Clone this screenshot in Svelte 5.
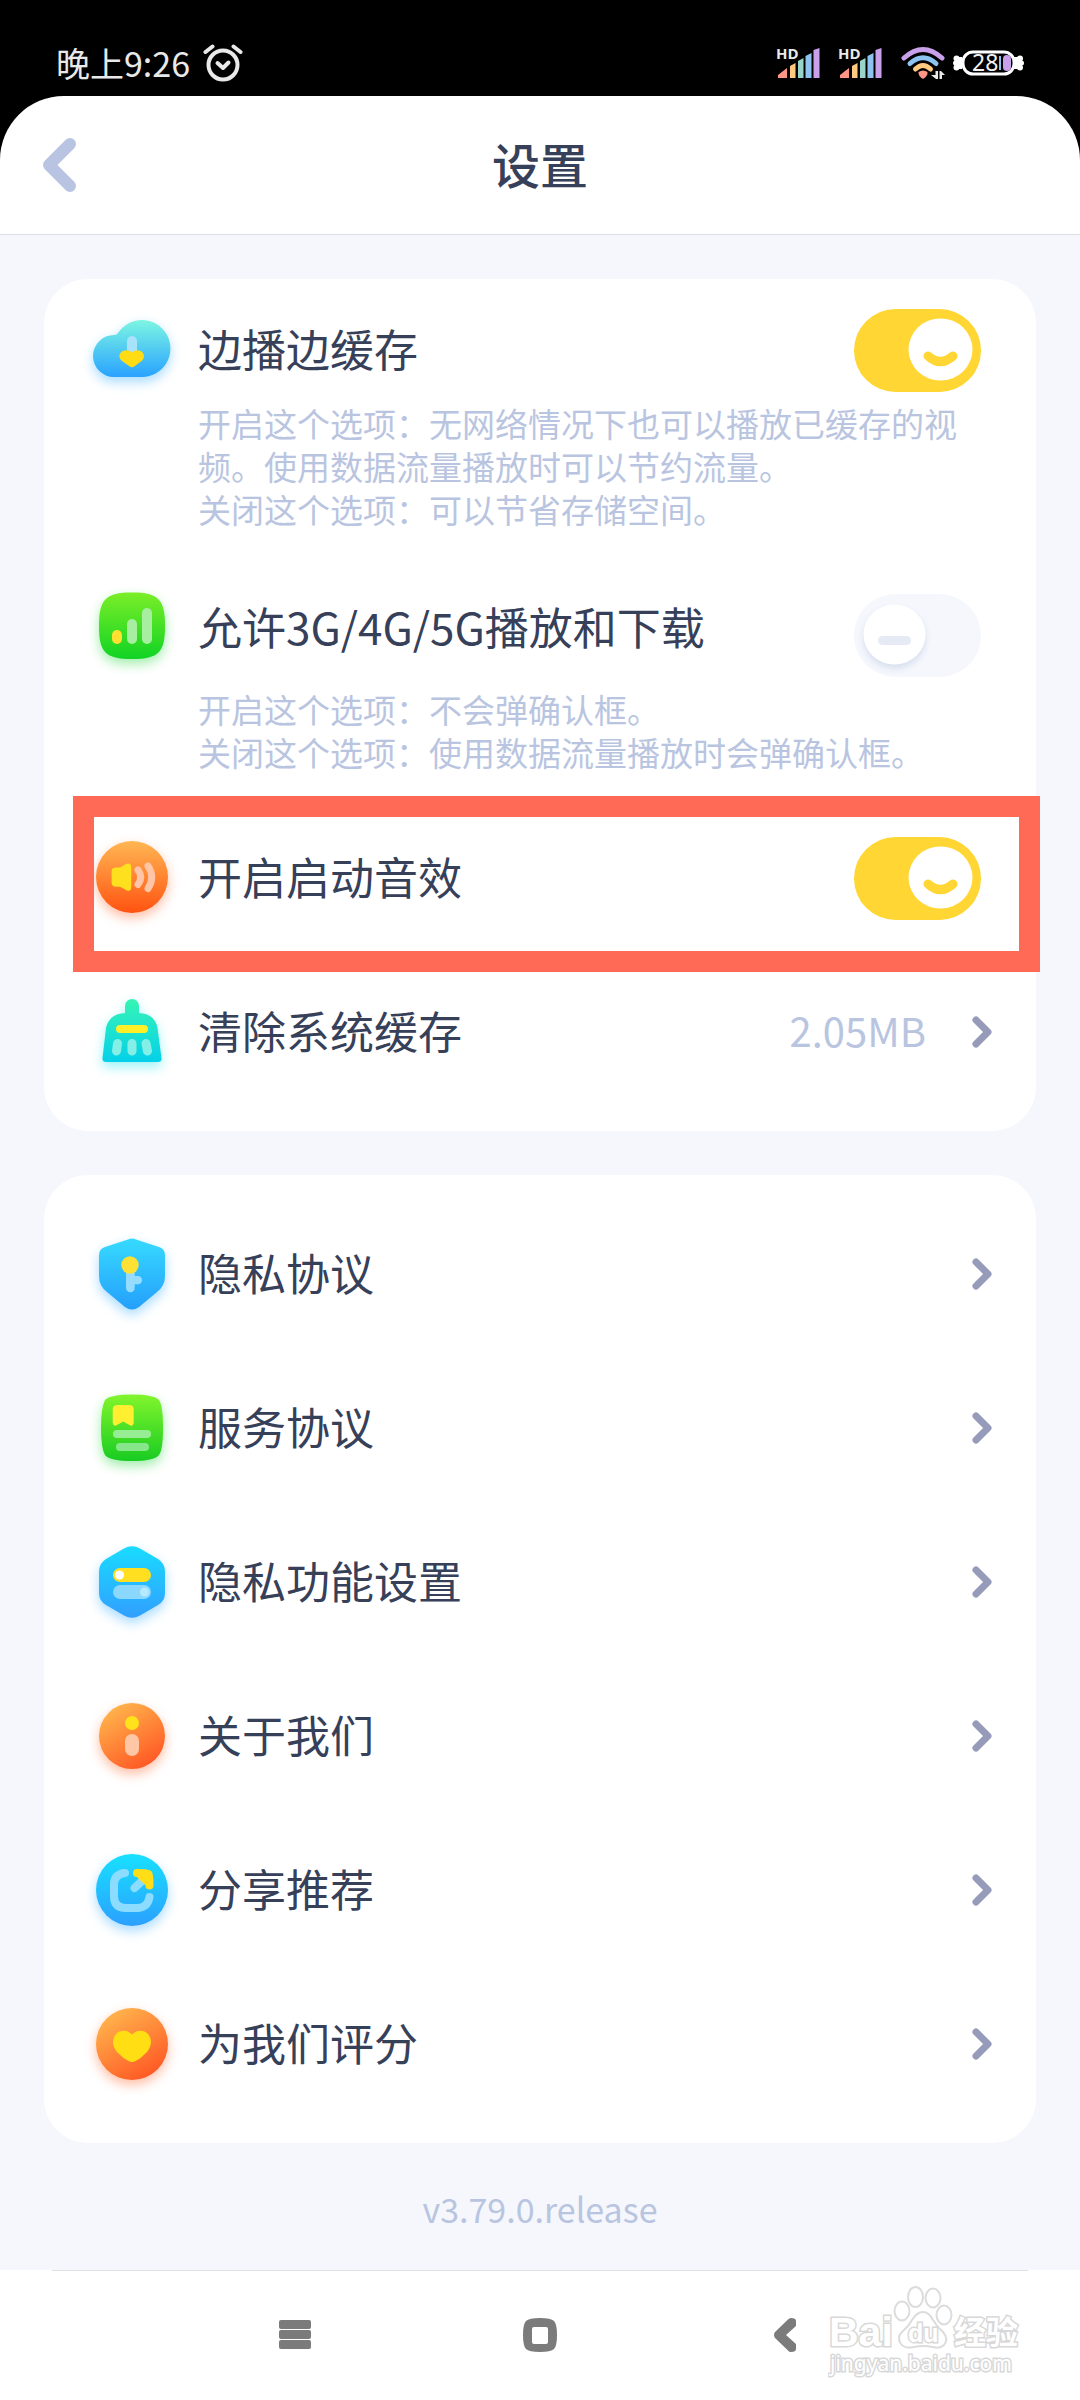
<script>
  let options = $state([
    {
      id: 'cache',
      title: '边播边缓存',
      checked: true,
      notes: [
        '开启这个选项：无网络情况下也可以播放已缓存的视频。使用数据流量播放时可以节约流量。',
        '关闭这个选项：可以节省存储空间。'
      ]
    },
    {
      id: 'mobile',
      title: '允许3G/4G/5G播放和下载',
      checked: false,
      notes: [
        '开启这个选项：不会弹确认框。',
        '关闭这个选项：使用数据流量播放时会弹确认框。'
      ]
    }
  ]);
  let sound = $state(true);
  let cacheSize = '2.05MB';

  const links = [
    { id: 'privacy', title: '隐私协议' },
    { id: 'service', title: '服务协议' },
    { id: 'toggles', title: '隐私功能设置' },
    { id: 'about', title: '关于我们' },
    { id: 'share', title: '分享推荐' },
    { id: 'rate', title: '为我们评分' }
  ];

  // top colour, bottom colour of each gradient
  const gradients = {
    cache: ['#7df6e2', '#28a2ff'],
    mobile: ['#7bee28', '#10d324'],
    sound: ['#ffb653', '#ff5310'],
    clean: ['#36f5b4', '#04d0ea'],
    privacy: ['#37daff', '#249ffb'],
    service: ['#82f52c', '#18cc22'],
    toggles: ['#19dcff', '#319fff'],
    about: ['#ffc152', '#ff5c26'],
    share: ['#18e0ff', '#2ba0ff'],
    rate: ['#ffc152', '#ff5c26']
  };
</script>

{#snippet icon(id)}
  <svg class="icon {id}" viewBox="0 0 88 88" aria-hidden="true">
    {#if id === 'cache'}
      <path fill="url(#g-cache)" d="M26 71A21 21 0 0 1 26 29Q29 29 30 27A28.5 28.5 0 1 1 54 71Z" />
      <rect x="39" y="30" width="10" height="22" rx="5" fill="#a8e2fb" />
      <path fill="#ffdc14" d="M44 46.5C47 43.500 52 43.500 54.500 46.500C57 50 56 53 53.500 55L46.500 60.300Q44 62 41.500 60.300L34 55C31 52.500 30.500 49 33 46.500C35.500 43.500 41 43.500 44 46.500Z" />
    {:else if id === 'mobile'}
      <path fill="url(#g-mobile)" d="M44 8.500C71 8.500 77 16 77 42S71 75 44 75S11 68 11 42S17 8.500 44 8.500Z" />
      <rect x="24" y="46" width="10" height="14" rx="5" fill="#ffe02e" />
      <rect x="39" y="35" width="10" height="25" rx="5" fill="#a7eea0" />
      <rect x="54" y="24" width="10" height="36" rx="5" fill="#a7eea0" />
    {:else if id === 'sound'}
      <circle cx="44" cy="43" r="36" fill="url(#g-sound)" />
      <path fill="#ffe01f" d="M28 33.500H32L38.500 29.800Q43.300 28 43.300 34V52Q43.300 58.500 38.500 56.300L32 52.800H28Q23.600 52.500 23.600 48.500V37.500Q23.600 33.500 28 33.500Z" />
      <path class="soft-line" stroke-width="7" d="M50 36Q55.500 43 50 50.500M60 32Q67.500 43 60 54.500" stroke="#ffc5a6" />
    {:else if id === 'clean'}
      <path fill="url(#g-clean)" d="M37 26V18A7 7 0 0 1 51 18V25Q67 26 69.500 40L73.500 70Q74 74 70 74H18Q14 74 14.500 70L18 40Q21 26 37 25Z" />
      <rect x="28" y="37" width="32" height="8" rx="4" fill="#ffef28" />
      <path class="soft-line" stroke-width="9" d="M29.500 55.500L28.500 63M44 55.500V63M58 55.500L59.500 63" stroke="#84efe6" />
    {:else if id === 'privacy'}
      <path fill="url(#g-privacy)" d="M40 9.500Q44 7.500 48 9.500L71 17Q77 19 77 25V46Q77 56 69 62L51 77Q44 82 37 77L19 62Q11 56 11 46V25Q11 19 17 17Z" />
      <path fill="#96dcff" d="M38 38H46.700V46H50A4 4 0 0 1 50 54.300H46.700V58A4.300 4.300 0 0 1 38 58Z" />
      <circle cx="42" cy="35" r="8.700" fill="#ffe136" />
    {:else if id === 'service'}
      <path fill="url(#g-service)" d="M44 10.500Q66 10.500 71 16Q75 22 75 44T71 71Q66 77 44 77T17 71Q13 64 13 44T17 16Q22 10.500 44 10.500Z" />
      <path fill="#ffef30" d="M30 21H41Q45.700 21 45.700 25V39Q45 43 41.500 41L35.200 37.500L29 41Q25.500 43 24.700 39V25Q24.700 21 30 21Z" />
      <rect x="25" y="46" width="38" height="8" rx="4" fill="#96ed93" />
      <rect x="28" y="59" width="33" height="8" rx="4" fill="#86e68a" />
    {:else if id === 'toggles'}
      <path fill="url(#g-toggles)" d="M36 10.500Q44 6 52 10.500L70 21Q77 25.500 77 33V55Q77 63 70 67L52 77.500Q44 82 36 77.500L18 67Q11 63 11 55V33Q11 25.500 18 21Z" />
      <rect x="25" y="30" width="38" height="14" rx="7" fill="#ffdf1f" />
      <circle cx="31.500" cy="37" r="4.500" fill="#fff" />
      <rect x="25" y="47" width="38" height="14" rx="7" fill="#8bd8ff" />
      <circle cx="56.500" cy="54" r="4.500" fill="#b8eaff" />
    {:else if id === 'about'}
      <circle cx="44" cy="44" r="33" fill="url(#g-about)" />
      <circle cx="44" cy="31" r="7" fill="#ffe11c" />
      <rect x="37" y="42" width="14" height="22" rx="7" fill="#ffc7a5" />
    {:else if id === 'share'}
      <circle cx="44" cy="44" r="36" fill="url(#g-share)" />
      <path class="soft-line" stroke-width="8" d="M37 27H36Q26 29 26 38V50Q26 62 38 62H50Q60 61 61.500 51M46.500 42L54 35" stroke="#8cdcff" />
      <path class="soft-line" stroke-width="8" d="M49 27Q58 27 60.500 28Q61.500 31 61.500 39.500M51 27.500L60 36" stroke="#ffde17" />
    {:else if id === 'rate'}
      <circle cx="44" cy="44" r="36" fill="url(#g-rate)" />
      <path fill="#ffde14" d="M44 34.500C48 29.500 56 29.500 60 34C65 40 63 47 59 52Q53 58.500 47 61.300Q44 62.500 41 61.300Q35 58.500 29 52C25 47 23 40 28 34C32 29.500 40 29.500 44 34.500Z" />
    {/if}
  </svg>
{/snippet}

{#snippet knob(on)}
  <svg class="switch-face" viewBox="0 0 127 83" aria-hidden="true">
    {#if on}
      <ellipse cx="86.500" cy="40.500" rx="32" ry="31" fill="#fff" />
      <path d="M74 47Q86.500 58 99 47" fill="none" stroke="#ffd633" stroke-width="9" stroke-linecap="round" />
    {:else}
      <ellipse class="knob-off" cx="40.500" cy="40.500" rx="31" ry="30" fill="#fff" />
      <rect x="24" y="42" width="33" height="9" rx="4.500" fill="#e5eaf5" />
    {/if}
  </svg>
{/snippet}

{#snippet chevron()}
  <svg class="chevron" viewBox="0 0 20 32" aria-hidden="true">
    <path d="M4 4L16 16L4 28" fill="none" stroke="#959bb9" stroke-width="7" stroke-linecap="round" stroke-linejoin="round" />
  </svg>
{/snippet}

{#snippet signal()}
  <svg width="44" height="44" viewBox="0 -6 44 44" aria-hidden="true">
    <path fill="#ff9685" d="M2 31V28L11 21V31Z" />
    <path fill="#ffc980" d="M14 31V19L19.500 16V31Z" />
    <path fill="#97d5cb" d="M22 31V14L27.500 11V31Z" />
    <path fill="#8dc3f0" d="M29.500 31V9L35.500 6V31Z" />
    <path fill="#c9a1ea" d="M37.500 31V3L43.500 1V31Z" />
    <text x="0" y="12" class="hd">HD</text>
  </svg>
{/snippet}

<svg class="defs" aria-hidden="true">
  <defs>
    {#each Object.entries(gradients) as [id, stops]}
      <linearGradient id="g-{id}" x1="0" y1="0" x2={id === 'about' || id === 'rate' ? 0.6 : 0} y2="1">
        <stop offset="0" stop-color={stops[0]} />
        <stop offset="1" stop-color={stops[1]} />
      </linearGradient>
    {/each}
  </defs>
</svg>

<div class="screen">
  <div class="status">
    <div class="clock">
      <span>晚上9:26</span>
      <svg width="40" height="38" viewBox="0 0 40 38" aria-hidden="true">
        <g fill="none" stroke="#e9e9e9" stroke-width="4" stroke-linecap="round" stroke-linejoin="round">
          <circle cx="20" cy="21" r="14.500" />
          <path d="M14.500 19L20 24L25.500 18.500" />
          <path d="M2.500 8L9.500 2.500M37.500 8L30.500 2.500" />
        </g>
      </svg>
    </div>
    <div class="signals">
      {@render signal()}
      {@render signal()}
      <svg width="46" height="36" viewBox="0 0 46 36" aria-hidden="true">
        <g fill="none" stroke-width="5" stroke-linecap="round">
          <path stroke="#c9a1ea" d="M4 13Q23 -4 42 13" />
          <path stroke="#8dc3f0" d="M10 18.500Q23 7 36 18.500" />
          <path stroke="#ffc980" d="M15.500 24Q23 17 30.500 24" />
        </g>
        <path fill="#ff9685" d="M18.500 27Q23 24 27.500 27Q28 31 23 34Q18 31 18.500 27Z" />
        <path fill="#e9e9e9" d="M35.500 26H38V34H36L31 30H35.500ZM39.500 34V26H41L45 30H42V34Z" />
      </svg>
      <svg class="battery" width="76" height="32" viewBox="0 0 76 32" aria-hidden="true">
        <g fill="#fff">
          <circle cx="6.500" cy="11.500" r="3" /><circle cx="5.500" cy="16" r="2.500" /><circle cx="6.500" cy="20.500" r="3" /><rect x="7" y="10" width="5" height="12" />
          <circle cx="70" cy="11.500" r="3" /><circle cx="71.500" cy="16" r="2.500" /><circle cx="70" cy="20.500" r="3" /><rect x="64" y="10" width="6" height="12" />
        </g>
        <rect x="13" y="5" width="51" height="22" rx="10" fill="none" stroke="#fff" stroke-width="3" />
        <rect x="49" y="9" width="2" height="14" fill="#8dc3f0" />
        <rect x="53" y="8" width="8" height="16" rx="4" fill="#c9a1ea" />
        <text x="22" y="24" class="level">28</text>
      </svg>
    </div>
  </div>

  <header>
    <button class="back" aria-label="返回">
      <svg width="34" height="54" viewBox="0 0 34 54" aria-hidden="true">
        <path d="M28 6L7 27L28 48" fill="none" stroke="#b8c4e2" stroke-width="12" stroke-linecap="round" stroke-linejoin="round" />
      </svg>
    </button>
    <h1>设置</h1>
  </header>

  <main>
    <section class="card">
      {#each options as option (option.id)}
        <div class="option {option.id}">
          <div class="head">
            {@render icon(option.id)}
            <label class="title" for={option.id}>{option.title}</label>
            <span class="switch" class:on={option.checked}>
              <input id={option.id} type="checkbox" bind:checked={option.checked} />
              {@render knob(option.checked)}
            </span>
          </div>
          <div class="notes">
            {#each option.notes as note}
              <p>{note}</p>
            {/each}
          </div>
        </div>
      {/each}
      <div class="row">
        {@render icon('sound')}
        <label class="title" for="sound">开启启动音效</label>
        <span class="switch" class:on={sound}>
          <input id="sound" type="checkbox" bind:checked={sound} />
          {@render knob(sound)}
        </span>
        <span class="highlight"></span>
      </div>
      <button class="row">
        {@render icon('clean')}
        <span class="title">清除系统缓存</span>
        <span class="value">{cacheSize}</span>
        {@render chevron()}
      </button>
    </section>

    <nav class="card">
      {#each links as link (link.id)}
        <a class="row" href="#{link.id}">
          {@render icon(link.id)}
          <span class="title">{link.title}</span>
          {@render chevron()}
        </a>
      {/each}
    </nav>
  </main>

  <p class="version">v3.79.0.release</p>

  <footer>
    <button aria-label="菜单">
      <svg width="34" height="34" viewBox="0 0 34 34" fill="#7b7b7b" aria-hidden="true">
        <rect x="1" y="2" width="32" height="9" rx="2" />
        <rect x="1" y="12" width="32" height="9" rx="2" />
        <rect x="1" y="22" width="32" height="9" rx="2" />
      </svg>
    </button>
    <button aria-label="主屏幕">
      <svg width="34" height="34" viewBox="0 0 34 34" aria-hidden="true">
        <path fill="#7b7b7b" fill-rule="evenodd" d="M17 0Q28 0 31 3T34 17T31 31T17 34T3 31T0 17T3 3T17 0ZM11 9Q9 9 9 11V24Q9 26 11 26H23Q25 26 25 24V11Q25 9 23 9Z" />
      </svg>
    </button>
    <button aria-label="返回上一页">
      <svg width="22" height="34" viewBox="0 0 22 34" aria-hidden="true">
        <path fill="#7b7b7b" d="M14 1.500Q15 0 17 0Q22 0 22 3V8L12 17L22 26V31Q22 34 17 34Q15 34 14 32.500L1 20Q-1 17 1 14Z" />
      </svg>
    </button>
    <svg class="watermark" width="196" height="100" viewBox="0 0 196 100">
      <g fill="#fff" stroke="#dcdcdc" stroke-width="2">
        <ellipse cx="74" cy="29" rx="7.500" ry="9.500" />
        <ellipse cx="87.500" cy="15" rx="7.500" ry="10" />
        <ellipse cx="105" cy="16" rx="7.500" ry="9.500" />
        <ellipse cx="116" cy="33" rx="7.500" ry="9.500" />
        <path d="M95 30Q101 30 105 38Q109 45 115 50Q121 57 116 63Q112 67 105 65Q95 63 86 65Q77 67 73 62Q68 55 75 49Q81 44 84 38Q89 30 95 30Z" />
      </g>
      <text x="1" y="64" class="brand">Bai</text>
      <text x="80" y="60" class="du">du</text>
      <text x="126" y="62" class="cn">经验</text>
      <text x="2" y="89" class="site">jingyan.baidu.com</text>
    </svg>
  </footer>
</div>

<style>
  :global(body) {
    margin: 0;
    background: #fff;
  }
  .defs { position: absolute; width: 0; height: 0; }
  .screen {
    font-family: "Noto Sans CJK SC", "Noto Sans", sans-serif;
    background: #f5f7fd;
    color: #374059;
    min-height: 100vh;
    display: flex;
    flex-direction: column;
  }
  h1, p { margin: 0; }
  button { border: 0; background: none; padding: 0; font: inherit; color: inherit; cursor: pointer; }
  svg { flex: none; display: block; }

  .status {
    background: #000;
    color: #e9e9e9;
    display: flex;
    justify-content: space-between;
    padding: 39px 54px 73px 56px;
    margin-bottom: -64px;
  }
  .clock, .signals { display: flex; align-items: center; height: 48px; }
  .clock { gap: 13px; font-size: 34px; line-height: 48px; }
  .signals { gap: 18px; }
  .battery { margin-left: -14px; }
  .hd { font: bold 15px "Open Sans", sans-serif; fill: #e9e9e9; stroke: #000; stroke-width: 2px; paint-order: stroke; }
  .level { font: 23px "Noto Sans", sans-serif; fill: #f2f2f2; }

  header {
    background: #fff;
    border-bottom: 1px solid #dcdfe4;
    border-radius: 64px 64px 0 0;
    display: grid;
    grid-template-columns: 1fr auto 1fr;
    align-items: center;
    padding: 0 42px;
    height: 138px;
  }
  h1 { font-size: 48px; line-height: 68px; padding-bottom: 4px; font-weight: 500; }
  .back { justify-self: start; }

  main {
    display: flex;
    flex-direction: column;
    gap: 44px;
    padding: 44px 44px 0;
  }
  .card {
    background: #fff;
    border-radius: 44px;
    padding: 22px 0;
  }
  .head, .row {
    box-sizing: border-box;
    display: flex;
    align-items: center;
    width: 100%;
    padding: 0 44px;
    position: relative;
    color: inherit;
    text-decoration: none;
    text-align: left;
  }
  .head { height: 98px; }
  .row { height: 154px; }
  .title {
    flex: 1;
    margin-left: 22px;
    padding-bottom: 4px;
    font-size: 44px;
    line-height: 66px;
  }
  .notes {
    padding: 3px 76px 48px 154px;
    font-size: 33px;
    line-height: 43px;
    color: #b9c5e0;
  }
  .mobile .switch { align-self: flex-end; }
  .mobile .notes { padding-top: 11px; padding-bottom: 27px; }

  .icon { width: 88px; height: 88px; overflow: visible; filter: drop-shadow(0 5px 6px #27a8ff66); }
  .icon.mobile, .icon.service { filter: drop-shadow(0 5px 6px #14d42c66); }
  .icon.sound, .icon.about, .icon.rate { filter: drop-shadow(0 5px 6px #ff5a1c66); }
  .icon.clean { filter: drop-shadow(0 5px 6px #04e0f066); }
  .soft-line { fill: none; stroke-linecap: round; stroke-linejoin: round; }

  .switch {
    position: relative;
    flex: none;
    width: 127px;
    height: 83px;
    margin-right: 11px;
    border-radius: 42px;
    background: #f5f7fd;
  }
  .switch.on { background: #ffd633; }
  .switch input {
    position: absolute;
    inset: 0;
    width: 100%;
    height: 100%;
    margin: 0;
    opacity: 0;
    cursor: pointer;
  }
  .switch-face { width: 100%; height: 100%; pointer-events: none; }
  .knob-off { filter: drop-shadow(0 4px 3px #c9d2e6aa); }

  .value { font-size: 40px; line-height: 60px; padding-bottom: 4px; color: #b9c5e0; margin-right: 46px; }
  .chevron { width: 20px; height: 32px; }
  .highlight {
    position: absolute;
    inset: -5px -4px -17px 29px;
    border: 21px solid #ff6a57;
    pointer-events: none;
  }

  .version {
    font-size: 34px;
    line-height: 50px;
    padding: 41px 0 36px;
    text-align: center;
    color: #b9c5e0;
  }

  footer {
    flex: 1;
    position: relative;
    display: flex;
    align-items: center;
    padding: 0 16%;
    min-height: 130px;
    background: linear-gradient(#dfe1e6, #dfe1e6) center top / calc(100% - 104px) 1px no-repeat #fff;
  }
  footer button { flex: 1; display: flex; justify-content: center; }
  .watermark { position: absolute; right: 56px; top: 12px; }
  .watermark text { fill: #fff; stroke: #d8d8d8; stroke-width: 3px; paint-order: stroke; }
  .brand { font: bold 41px "Liberation Sans", sans-serif; }
  .du { font: bold 25px "Liberation Sans", sans-serif; }
  .cn { font: bold 32px "Noto Sans CJK SC", sans-serif; }
  .site { font: 21px "Noto Sans", sans-serif; }
</style>
